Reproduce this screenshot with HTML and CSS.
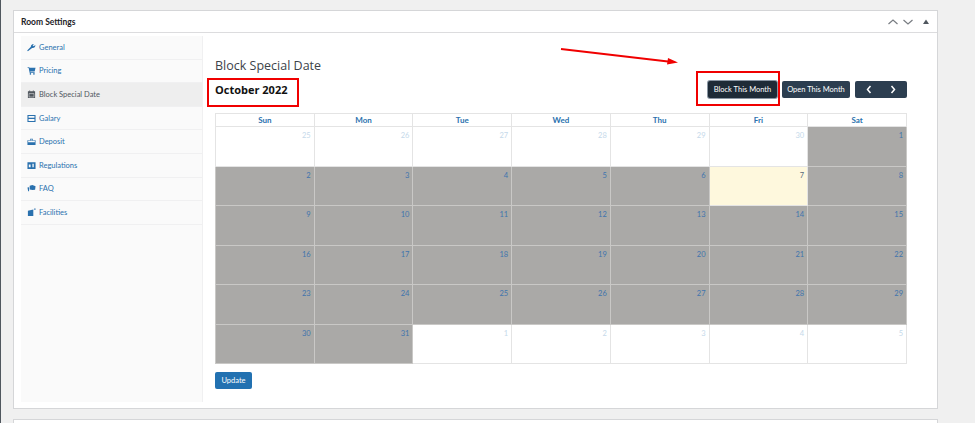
FILE: index.html
```html
<!DOCTYPE html>
<html lang="en">
<head>
    <meta charset="UTF-8">
    <title>Room Settings</title>
    <link rel="stylesheet" href="styles.css">
</head>
<body>
    <div class="panel">
        <div class="panel-head">
            <h2>Room Settings</h2>
            <div class="panel-tools">
                <svg width="12" height="8" viewBox="0 0 12 8"><path d="M1.5 6 6 2l4.500 4" /></svg>
                <svg width="12" height="8" viewBox="0 0 12 8"><path d="M1.500 2 6 6l4.500-4" /></svg>
                <svg class="tool-up" width="8" height="8" viewBox="0 0 8 8"><path d="M4 1.500 7 6H1z" /></svg>
            </div>
        </div>
        <div class="panel-body">
            <ul class="side-menu">
                <li><svg class="ico" viewBox="0 0 10 10"><path d="M1 9.200 0.200 8.300 4.300 4.300C4 2.500 5.500 0.800 7.800 1L6.300 2.600 7.400 3.700 9.300 2.300C9.500 4.500 7.500 6 5.700 5.500z" /></svg>General</li>
                <li><svg class="ico" viewBox="0 0 10 10"><path d="M0.500 1H2.300L2.700 2H9.500L8.500 6H3.600L3.800 6.900H8.500V7.700H3L1.700 1.800H0.500z" /><circle cx="3.800" cy="8.800" r="0.900" /><circle cx="7.700" cy="8.800" r="0.900" /></svg>Pricing</li>
                <li class="active"><svg class="ico" viewBox="0 0 10 10"><path d="M1 1.500H9V9H1zM2 4V8H8V4z" fill-rule="evenodd" /><path d="M2.500 4.500H7.500V7.500H2.500z" /><path d="M2.500 .5H3.500V2H2.500zM6.500 .5H7.500V2H6.500z" /></svg>Block Special Date</li>
                <li><svg class="ico" viewBox="0 0 10 10"><path d="M.5 1H9.500V9H.5zM1.700 2.100V4.300H8.300V2.100zM1.700 5.600V7.900H8.300V5.600z" fill-rule="evenodd" /></svg>Galary</li>
                <li><svg class="ico" viewBox="0 0 10 10"><path d="M.5 3.500H3.500V2H6.500V3.500H9.500V9H.5zM4.200 2.700V3.500H5.800V2.700zM1.300 4.300V5.800H8.700V4.300z" fill-rule="evenodd" /></svg>Deposit</li>
                <li><svg class="ico" viewBox="0 0 10 10"><path d="M.5 1.500H9.500V9H.5zM2 4V7H4V4zM6 3V7H7.500V3z" fill-rule="evenodd" /></svg>Regulations</li>
                <li><svg class="ico" viewBox="0 0 10 10"><path d="M3 2 6 1 9.500 2.500 9 6.500 6 6.800 3 6z" /><path d="M.5 4 2.300 3.500V8H1.300z" /></svg>FAQ</li>
                <li><svg class="ico" viewBox="0 0 10 10"><path d="M1 3 7 1.800V9H1z" /><path d="M8 .5H9.500V2H8z" /></svg>Facilities</li>
            </ul>
            <div class="main">
                <h1>Block Special Date</h1>
                <div class="cal-bar">
                    <div class="month">October 2022</div>
                    <div class="cal-actions">
                        <button class="btn btn-focus">Block This Month</button>
                        <button class="btn">Open This Month</button>
                        <button class="btn btn-nav">
                            <svg width="6" height="9" viewBox="0 0 6 9"><path d="M4.500 1 1.500 4.500l3 3.500" /></svg>
                            <svg width="6" height="9" viewBox="0 0 6 9"><path d="M1.500 1l3 3.500L1.500 8" /></svg>
                        </button>
                    </div>
                </div>
                <table class="calendar">
                    <thead>
                        <tr><th>Sun</th><th>Mon</th><th>Tue</th><th>Wed</th><th>Thu</th><th>Fri</th><th>Sat</th></tr>
                    </thead>
                    <tbody>
                        <tr>
                            <td class="off">25</td><td class="off">26</td><td class="off">27</td><td class="off">28</td><td class="off">29</td><td class="off">30</td><td class="blocked">1</td>
                        </tr>
                        <tr>
                            <td class="blocked">2</td><td class="blocked">3</td><td class="blocked">4</td><td class="blocked">5</td><td class="blocked">6</td><td class="today">7</td><td class="blocked">8</td>
                        </tr>
                        <tr>
                            <td class="blocked">9</td><td class="blocked">10</td><td class="blocked">11</td><td class="blocked">12</td><td class="blocked">13</td><td class="blocked">14</td><td class="blocked">15</td>
                        </tr>
                        <tr>
                            <td class="blocked">16</td><td class="blocked">17</td><td class="blocked">18</td><td class="blocked">19</td><td class="blocked">20</td><td class="blocked">21</td><td class="blocked">22</td>
                        </tr>
                        <tr>
                            <td class="blocked">23</td><td class="blocked">24</td><td class="blocked">25</td><td class="blocked">26</td><td class="blocked">27</td><td class="blocked">28</td><td class="blocked">29</td>
                        </tr>
                        <tr>
                            <td class="blocked">30</td><td class="blocked">31</td><td class="off">1</td><td class="off">2</td><td class="off">3</td><td class="off">4</td><td class="off">5</td>
                        </tr>
                    </tbody>
                </table>
                <button class="update-btn">Update</button>
            </div>
        </div>
    </div>
    <div class="panel panel-next"></div>

    <!-- Red annotations drawn over the screenshot -->
    <div class="mark mark-month"></div>
    <div class="mark mark-block"></div>
    <svg class="mark-arrow" width="125" height="22" viewBox="0 0 125 22">
        <path d="M1 3 108 15.500" stroke="#f00000" stroke-width="2" fill="none" />
        <path d="M108 12 118 16.500 107 18.500z" fill="#f00000" />
    </svg>
</body>
</html>
```

FILE: styles.css
```css
:root {
    --blue: #2271b1;
    --navy: #2c3e50;
    --line: #dcdcde;
}

html, body {
    height: 423px;
    overflow: hidden;
}

body {
    margin: 0;
    padding: 10px 0 0 12px;
    box-sizing: border-box;
    background: #f0f0f0;
    border-left: 1px solid #50575e;
    font-family: "Lato", "Open Sans", sans-serif;
    font-size: 7.500px;
    color: #3c434a;
    position: relative;
}

/* Panels */
.panel {
    width: 925px;
    box-sizing: border-box;
    background: #fff;
    border: 1px solid #d5d6d8;
}

.panel-next {
    margin-top: 10px;
    height: 20px;
}

.panel-head {
    display: flex;
    align-items: center;
    justify-content: space-between;
    height: 21px;
    padding: 0 7px;
    border-bottom: 1px solid var(--line);
}

.panel-head h2 {
    margin: 0;
    font-size: 8.500px;
    font-weight: 700;
    color: #1d2327;
}

.panel-tools {
    display: flex;
    align-items: center;
    gap: 3px;
}

.panel-tools svg {
    fill: none;
    stroke: #787c82;
    stroke-width: 1.200;
}

.panel-tools .tool-up {
    margin-left: 5px;
    fill: #50575e;
    stroke: none;
}

.panel-body {
    display: flex;
    height: 375px;
    padding: 2px 0 6px 7px;
    box-sizing: border-box;
}

/* Side menu */
.side-menu {
    list-style: none;
    margin: 1px 0 0;
    padding: 0;
    width: 182px;
    flex: none;
    background: #fafafa;
    border-right: 1px solid #f0f0f1;
    box-sizing: border-box;
}

.side-menu li {
    display: flex;
    align-items: center;
    gap: 3px;
    height: 23.600px;
    box-sizing: border-box;
    padding-left: 6px;
    border-bottom: 1px solid #f0f0f1;
    font-size: 7.500px;
    color: #2a71ae;
}

.side-menu li.active {
    background: #eeeeee;
    color: #50575e;
}

.ico {
    width: 9px;
    height: 9px;
    flex: none;
    fill: currentColor;
}

/* Calendar area */
.main {
    width: 692px;
    margin-left: 12px;
}

.main h1 {
    margin: 0;
    padding-top: 22px;
    font-family: "Open Sans", sans-serif;
    font-size: 12.500px;
    line-height: 18px;
    font-weight: 400;
    color: #3c434a;
}

.cal-bar {
    display: flex;
    justify-content: space-between;
    align-items: center;
    height: 17px;
    margin-top: 6px;
}

.month {
    font-family: "Open Sans", sans-serif;
    font-size: 11px;
    font-weight: 700;
    color: #111;
}

.cal-actions {
    display: flex;
    gap: 5px;
}

.btn {
    width: 68px;
    height: 17px;
    padding: 0;
    border: 0;
    border-radius: 2px;
    background: var(--navy);
    color: #fff;
    font-family: inherit;
    font-size: 7.500px;
    white-space: nowrap;
}

.btn-focus {
    width: 69px;
    background: #1e2b37;
    box-shadow: 0 0 0 1px #8a96a3;
}

.btn-nav {
    display: flex;
    align-items: center;
    justify-content: space-between;
    width: 52px;
    padding: 0 11px;
    box-sizing: border-box;
}

.btn-nav svg {
    fill: none;
    stroke: #fff;
    stroke-width: 1.500;
}

.calendar {
    width: 692px;
    margin-top: 15px;
    table-layout: fixed;
    border-collapse: collapse;
}

.calendar th {
    height: 12px;
    padding: 0;
    border: 1px solid #e4e4e4;
    font-size: 8px;
    font-weight: 700;
    color: #2a71ae;
}

.calendar td {
    height: 39.500px;
    padding: 3px 3px 0 0;
    box-sizing: border-box;
    border: 1px solid #e4e4e4;
    text-align: right;
    vertical-align: top;
    font-size: 7.500px;
    line-height: 11px;
}

.calendar td.off {
    color: #c5d9ea;
    background: #fff;
}

.calendar td.blocked {
    color: #3f74ad;
    background: #aaa9a7;
    border-color: #c9c8c6;
}

.calendar td.today {
    color: #5a6b7a;
    background: #fef8dd;
}

.update-btn {
    display: block;
    width: 37px;
    height: 17px;
    margin-top: 8px;
    padding: 0;
    border: 0;
    border-radius: 2px;
    background: var(--blue);
    color: #fff;
    font-family: inherit;
    font-size: 7.500px;
}

/* Annotations */
.mark {
    position: absolute;
    box-sizing: border-box;
    border: 2px solid #f00000;
}

.mark-month {
    left: 206px;
    top: 78px;
    width: 92px;
    height: 29px;
}

.mark-block {
    left: 695px;
    top: 71px;
    width: 84px;
    height: 35px;
}

.mark-arrow {
    position: absolute;
    left: 559px;
    top: 46px;
}
```
